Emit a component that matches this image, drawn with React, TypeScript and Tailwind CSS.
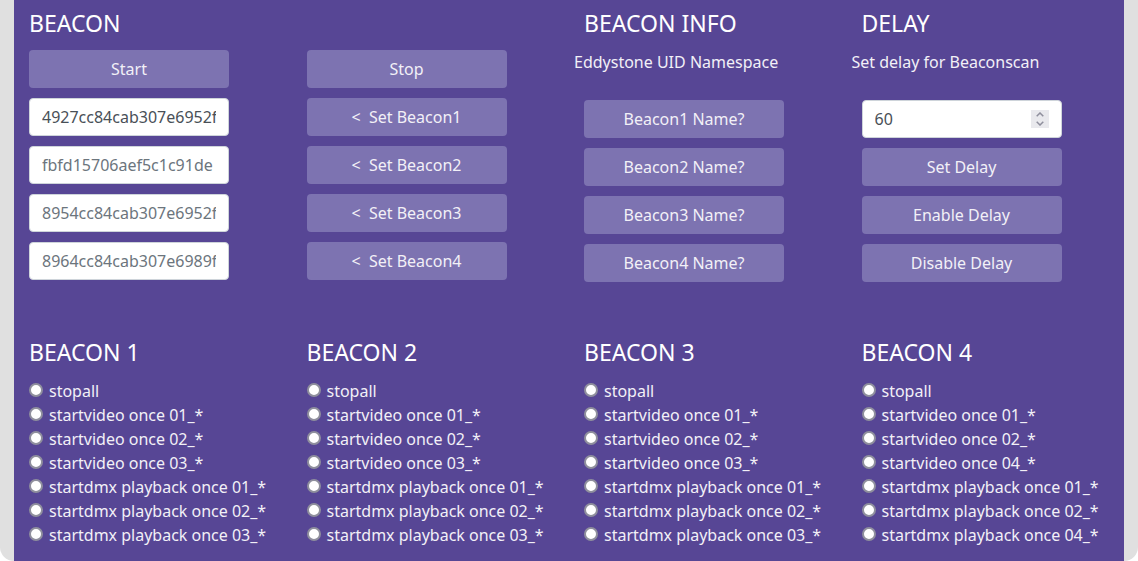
import { useState } from "react";
import type { ReactNode } from "react";

const buttonClass =
  "block h-[38px] w-[200px] cursor-pointer rounded bg-[#7d73b1] text-center text-base text-[#f2f0f7] whitespace-pre hover:bg-[#8a80bd]";

const fieldClass =
  "block h-[38px] w-[200px] rounded border border-[#ced4da] bg-white px-3 text-base text-[#495057] placeholder:text-[#6c757d] placeholder:opacity-100 outline-none";

const beaconIds = [
  { placeholder: "", value: "4927cc84cab307e6952f" },
  { placeholder: "fbfd15706aef5c1c91de", value: "" },
  { placeholder: "8954cc84cab307e6952f", value: "" },
  { placeholder: "8964cc84cab307e6989f", value: "" },
];

const actionGroups = [
  { id: 1, last: "03" },
  { id: 2, last: "03" },
  { id: 3, last: "03" },
  { id: 4, last: "04" },
];

function actionsFor(last: string) {
  return [
    "stopall",
    "startvideo once 01_*",
    "startvideo once 02_*",
    `startvideo once ${last}_*`,
    "startdmx playback once 01_*",
    "startdmx playback once 02_*",
    `startdmx playback once ${last}_*`,
  ];
}

function Heading({ children }: { children: ReactNode }) {
  return <h2 className="text-[23px] leading-8 text-white">{children}</h2>;
}

function DelayField() {
  const [delay, setDelay] = useState(60);
  return (
    <div className="relative w-[200px]">
      <input
        type="number"
        aria-label="Delay"
        value={delay}
        onChange={(e) => setDelay(Number(e.target.value))}
        className={`${fieldClass} [appearance:textfield] [&::-webkit-inner-spin-button]:appearance-none`}
      />
      <div className="absolute inset-y-0 right-[13px] flex items-center">
        <div className="flex h-[18px] w-[18px] flex-col bg-[#e9e9ed] text-[#8f8f9d]">
          <button type="button" aria-label="Increase delay" onClick={() => setDelay(delay + 1)} className="flex h-[9px] items-end justify-center pb-[2px]">
            <svg width="8" height="5" viewBox="0 0 8 5" fill="none" stroke="currentColor" strokeWidth="1.5">
              <path d="M0.7 4.3 4 1 7.3 4.3" />
            </svg>
          </button>
          <button type="button" aria-label="Decrease delay" onClick={() => setDelay(delay - 1)} className="flex h-[9px] items-start justify-center pt-[2px]">
            <svg width="8" height="5" viewBox="0 0 8 5" fill="none" stroke="currentColor" strokeWidth="1.5">
              <path d="M0.7 0.7 4 4 7.3 0.7" />
            </svg>
          </button>
        </div>
      </div>
    </div>
  );
}

export default function App() {
  return (
    <div className="bg-white font-['Noto_Sans','Open_Sans',sans-serif] text-base text-[#f2f0f7]">
      <div className="rounded-b-[14px] bg-[#e0e0e0] px-[14px]">
        <main className="bg-[#574695] pt-[7px] pb-[14px]">
          <div className="grid grid-cols-4">
            <section className="px-[15px]">
              <Heading>BEACON</Heading>
              <div className="mt-[11px] flex flex-col gap-[10px]">
                <button type="button" className={buttonClass}>Start</button>
                {beaconIds.map((b, i) => (
                  <input
                    key={i}
                    type="text"
                    aria-label={`Beacon ${i + 1} namespace`}
                    defaultValue={b.value}
                    placeholder={b.placeholder}
                    className={fieldClass}
                  />
                ))}
              </div>
            </section>

            <section className="px-[15px] pt-[43px]">
              <div className="flex flex-col gap-[10px]">
                <button type="button" className={buttonClass}>Stop</button>
                {[1, 2, 3, 4].map((n) => (
                  <button key={n} type="button" className={buttonClass}>{`<  Set Beacon${n}`}</button>
                ))}
              </div>
            </section>

            <section className="px-[15px]">
              <Heading>BEACON INFO</Heading>
              <p className="-ml-[10px] mt-[11px] leading-6">Eddystone UID Namespace</p>
              <div className="mt-[26px] flex flex-col gap-[10px]">
                {[1, 2, 3, 4].map((n) => (
                  <button key={n} type="button" className={buttonClass}>{`Beacon${n} Name?`}</button>
                ))}
              </div>
            </section>

            <section className="px-[15px]">
              <Heading>DELAY</Heading>
              <p className="-ml-[10px] mt-[11px] leading-6">Set delay for Beaconscan</p>
              <div className="mt-[26px] flex flex-col gap-[10px]">
                <DelayField />
                <button type="button" className={buttonClass}>Set Delay</button>
                <button type="button" className={buttonClass}>Enable Delay</button>
                <button type="button" className={buttonClass}>Disable Delay</button>
              </div>
            </section>
          </div>

          <div className="mt-[54px] grid grid-cols-4">
            {actionGroups.map((group) => (
              <section key={group.id} className="px-[15px]">
                <Heading>{`BEACON ${group.id}`}</Heading>
                <div className="mt-[11px]">
                  {actionsFor(group.last).map((action) => (
                    <label key={action} className="flex h-6 items-center gap-[6px] leading-6 whitespace-nowrap">
                      <input
                        type="radio"
                        name={`beacon-${group.id}`}
                        value={action}
                        className="mb-[2px] h-[14px] w-[14px] shrink-0 appearance-none rounded-full border-2 border-[#8f8f9d] bg-white checked:border-4 checked:border-[#0060df]"
                      />
                      {action}
                    </label>
                  ))}
                </div>
              </section>
            ))}
          </div>
        </main>
      </div>
    </div>
  );
}
